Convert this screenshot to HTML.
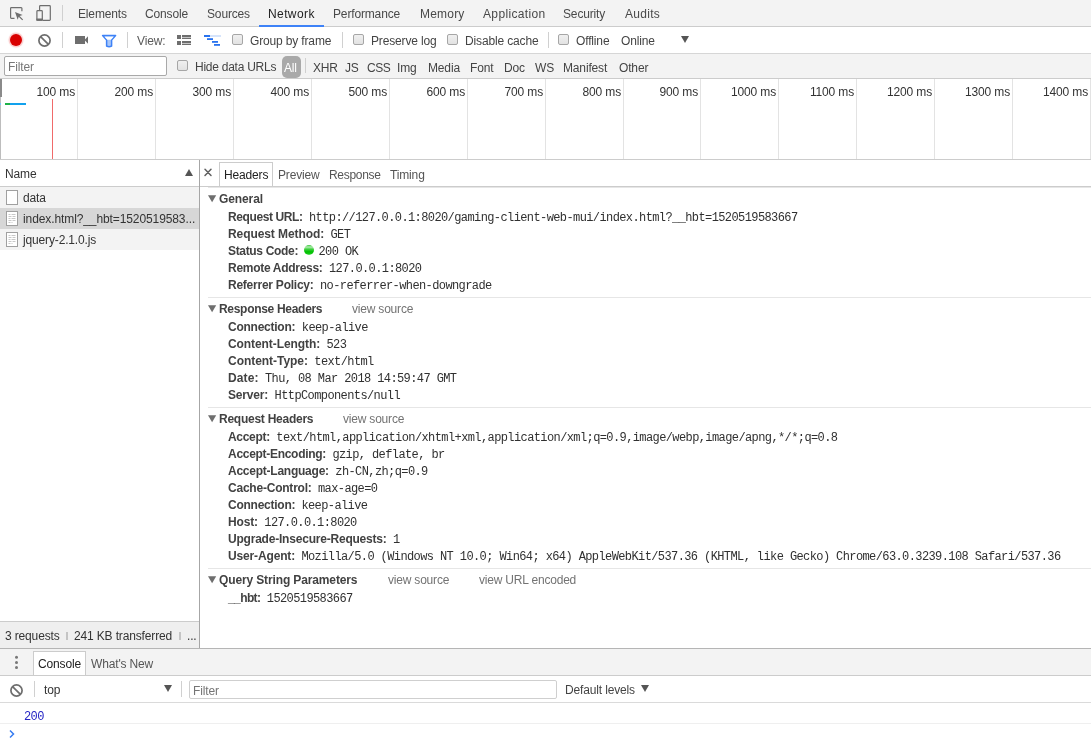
<!DOCTYPE html>
<html><head><meta charset="utf-8">
<style>
*{box-sizing:border-box}
html,body{margin:0;padding:0}
body{width:1091px;height:746px;overflow:hidden;position:relative;background:#fff;font-family:"Liberation Sans",sans-serif;font-size:12px;color:#333}
.bg{position:absolute}
.t{position:absolute;white-space:nowrap;line-height:14px;letter-spacing:-.15px}
.m{font-family:"Liberation Mono",monospace;font-size:12px;letter-spacing:-.6px;padding-top:1px}
.hl{position:absolute;height:1px}
.vl{position:absolute;width:1px}
.cb{position:absolute;width:11px;height:11px;border:1px solid #a6a6a6;border-radius:2px;background:linear-gradient(#f0f0f0,#e2e2e2)}
.sep{position:absolute;width:1px;background:#d0d0d0}
svg{position:absolute}
.k{font-weight:bold;color:#424242}
.sec{position:absolute;left:0;width:891px}
</style></head><body><div id="root" style="position:absolute;left:0;top:0;width:1091px;height:746px;will-change:transform">
<!-- ============ TAB BAR ============ -->
<div class="bg" style="left:0;top:0;width:1091px;height:26px;background:#f3f3f3"></div>
<div class="hl" style="left:0;top:26px;width:1091px;background:#cccccc"></div>
<svg style="left:8px;top:5px" width="18" height="18" viewBox="0 0 18 18">
 <path d="M6.5 13.3H3.3a.7.7 0 0 1-.7-.7V3.4a.7.7 0 0 1 .7-.7h9.9a.7.7 0 0 1 .7.7V6.2" fill="none" stroke="#6e6e6e" stroke-width="1.2"/>
 <path d="M7 7.1L14.6 9.9L11.6 10.9L15.1 14.4L14.2 15.3L10.7 11.8L9.7 14.7Z" fill="#6e6e6e"/>
</svg>
<svg style="left:35px;top:4px" width="18" height="18" viewBox="0 0 18 18">
 <path d="M4.6 6.2V2.4A.8.8 0 0 1 5.4 1.6h9.1a.8.8 0 0 1 .8.8v13.1a.8.8 0 0 1-.8.8H7.8" fill="none" stroke="#6e6e6e" stroke-width="1.2"/>
 <rect x="1.9" y="6.6" width="5.4" height="9.6" rx=".8" fill="none" stroke="#6e6e6e" stroke-width="1.2"/>
 <rect x="1.3" y="14.6" width="6.6" height="2.2" rx=".5" fill="#6e6e6e"/>
</svg>
<div class="sep" style="left:62px;top:5px;height:16px"></div>
<div class="t" style="left:78px;top:7px;color:#494949">Elements</div>
<div class="t" style="left:145px;top:7px;color:#494949">Console</div>
<div class="t" style="left:207px;top:7px;color:#494949">Sources</div>
<div class="t" style="left:268px;top:7px;color:#222;letter-spacing:.4px">Network</div>
<div class="t" style="left:333px;top:7px;color:#494949">Performance</div>
<div class="t" style="left:420px;top:7px;color:#494949;letter-spacing:.2px">Memory</div>
<div class="t" style="left:483px;top:7px;color:#494949;letter-spacing:.35px">Application</div>
<div class="t" style="left:563px;top:7px;color:#494949">Security</div>
<div class="t" style="left:625px;top:7px;color:#494949;letter-spacing:.3px">Audits</div>
<div class="bg" style="left:259px;top:25px;width:65px;height:2px;background:#3e82f7"></div>

<!-- ============ TOOLBAR ============ -->
<div class="hl" style="left:0;top:53px;width:1091px;background:#d6d6d6"></div>
<div class="bg" style="left:10px;top:34px;width:12px;height:12px;border-radius:50%;background:#d90000;box-shadow:0 0 1px 1.5px rgba(240,80,80,.3)"></div>
<svg style="left:37px;top:33px" width="15" height="15" viewBox="0 0 15 15">
 <circle cx="7.5" cy="7.5" r="5.6" fill="none" stroke="#6e6e6e" stroke-width="1.7"/>
 <path d="M3.6 3.6L11.4 11.4" stroke="#6e6e6e" stroke-width="1.7"/>
</svg>
<div class="sep" style="left:62px;top:32px;height:16px"></div>
<svg style="left:74px;top:35px" width="16" height="10" viewBox="0 0 16 10">
 <rect x="1" y="1" width="10" height="8" fill="#6e6e6e"/>
 <path d="M10.5 5L14 1.2V8.8Z" fill="#6e6e6e"/>
</svg>
<svg style="left:101px;top:34px" width="17" height="14" viewBox="0 0 17 14">
 <path d="M1.6 1.5H14.6L10.6 6V12Q8.1 13.3 5.6 12V6Z" fill="#a9c7f8" stroke="#3e82f7" stroke-width="1.5" stroke-linejoin="round"/>
 <path d="M3.5 2.7H12.7L9.9 5.8H6.3Z" fill="#fff"/>
</svg>
<div class="sep" style="left:127px;top:32px;height:16px"></div>
<div class="t" style="left:137px;top:34px;color:#5a5a5a">View:</div>
<svg style="left:176px;top:34px" width="16" height="13" viewBox="0 0 16 13">
 <rect x="1" y="1" width="4" height="4" fill="#6e6e6e"/>
 <rect x="6" y="1" width="9" height="2.4" fill="#6e6e6e"/>
 <rect x="6" y="4" width="9" height="1" fill="#6e6e6e"/>
 <rect x="1" y="7" width="4" height="4" fill="#6e6e6e"/>
 <rect x="6" y="7" width="9" height="2.4" fill="#6e6e6e"/>
 <rect x="6" y="10" width="9" height="1" fill="#6e6e6e"/>
</svg>
<svg style="left:203px;top:34px" width="20" height="13" viewBox="0 0 20 13">
 <rect x="7" y="1" width="11" height="2" fill="#d6e4fb"/>
 <rect x="1" y="1" width="6" height="2" fill="#2a73ee"/>
 <rect x="4" y="4.2" width="6" height="1.8" fill="#2a73ee"/>
 <rect x="9" y="7" width="6" height="1.8" fill="#2a73ee"/>
 <rect x="11" y="10" width="6" height="1.8" fill="#2a73ee"/>
</svg>
<div class="cb" style="left:232px;top:34px"></div>
<div class="t" style="left:250px;top:34px;color:#444">Group by frame</div>
<div class="sep" style="left:342px;top:32px;height:16px"></div>
<div class="cb" style="left:353px;top:34px"></div>
<div class="t" style="left:371px;top:34px;color:#444">Preserve log</div>
<div class="cb" style="left:447px;top:34px"></div>
<div class="t" style="left:465px;top:34px;color:#444">Disable cache</div>
<div class="sep" style="left:548px;top:32px;height:16px"></div>
<div class="cb" style="left:558px;top:34px"></div>
<div class="t" style="left:576px;top:34px;color:#444">Offline</div>
<div class="t" style="left:621px;top:34px;color:#444">Online</div>
<svg style="left:680px;top:35px" width="10" height="9" viewBox="0 0 10 9"><path d="M1 1H9L5 8Z" fill="#555"/></svg>

<!-- ============ FILTER BAR ============ -->
<div class="bg" style="left:0;top:54px;width:1091px;height:24px;background:#f3f3f3"></div>
<div class="hl" style="left:0;top:78px;width:1091px;background:#cccccc"></div>
<div class="bg" style="left:4px;top:56px;width:163px;height:20px;border:1px solid #a9a9a9;border-radius:2px;background:#fff"></div>
<div class="t" style="left:8px;top:60px;color:#777">Filter</div>
<div class="cb" style="left:177px;top:60px"></div>
<div class="t" style="left:195px;top:60px;letter-spacing:-.25px;color:#444">Hide data URLs</div>
<div class="bg" style="left:282px;top:56px;width:19px;height:22px;border-radius:5px;background:#a9a9a9"></div>
<div class="t" style="left:284px;top:61px;color:#fff">All</div>
<div class="sep" style="left:305px;top:58px;height:15px"></div>
<div class="t" style="left:313px;top:61px;color:#444">XHR</div>
<div class="t" style="left:345px;top:61px;color:#444">JS</div>
<div class="t" style="left:367px;top:61px;letter-spacing:-.5px;color:#444">CSS</div>
<div class="t" style="left:397px;top:61px;color:#444">Img</div>
<div class="t" style="left:428px;top:61px;color:#444">Media</div>
<div class="t" style="left:470px;top:61px;color:#444">Font</div>
<div class="t" style="left:504px;top:61px;color:#444">Doc</div>
<div class="t" style="left:535px;top:61px;color:#444">WS</div>
<div class="t" style="left:563px;top:61px;color:#444">Manifest</div>
<div class="t" style="left:619px;top:61px;color:#444">Other</div>

<!-- ============ TIMELINE ============ -->
<div class="hl" style="left:0;top:159px;width:1091px;background:#cccccc"></div>
<div id="grid"><div class="vl" style="left:77px;top:79px;height:80px;background:#e3e3e3"></div>
<div class="t" style="right:1016px;top:85px;color:#333">100 ms</div>
<div class="vl" style="left:155px;top:79px;height:80px;background:#e3e3e3"></div>
<div class="t" style="right:938px;top:85px;color:#333">200 ms</div>
<div class="vl" style="left:233px;top:79px;height:80px;background:#e3e3e3"></div>
<div class="t" style="right:860px;top:85px;color:#333">300 ms</div>
<div class="vl" style="left:311px;top:79px;height:80px;background:#e3e3e3"></div>
<div class="t" style="right:782px;top:85px;color:#333">400 ms</div>
<div class="vl" style="left:389px;top:79px;height:80px;background:#e3e3e3"></div>
<div class="t" style="right:704px;top:85px;color:#333">500 ms</div>
<div class="vl" style="left:467px;top:79px;height:80px;background:#e3e3e3"></div>
<div class="t" style="right:626px;top:85px;color:#333">600 ms</div>
<div class="vl" style="left:545px;top:79px;height:80px;background:#e3e3e3"></div>
<div class="t" style="right:548px;top:85px;color:#333">700 ms</div>
<div class="vl" style="left:623px;top:79px;height:80px;background:#e3e3e3"></div>
<div class="t" style="right:470px;top:85px;color:#333">800 ms</div>
<div class="vl" style="left:700px;top:79px;height:80px;background:#e3e3e3"></div>
<div class="t" style="right:393px;top:85px;color:#333">900 ms</div>
<div class="vl" style="left:778px;top:79px;height:80px;background:#e3e3e3"></div>
<div class="t" style="right:315px;top:85px;color:#333">1000 ms</div>
<div class="vl" style="left:856px;top:79px;height:80px;background:#e3e3e3"></div>
<div class="t" style="right:237px;top:85px;color:#333">1100 ms</div>
<div class="vl" style="left:934px;top:79px;height:80px;background:#e3e3e3"></div>
<div class="t" style="right:159px;top:85px;color:#333">1200 ms</div>
<div class="vl" style="left:1012px;top:79px;height:80px;background:#e3e3e3"></div>
<div class="t" style="right:81px;top:85px;color:#333">1300 ms</div>
<div class="vl" style="left:1090px;top:79px;height:80px;background:#e3e3e3"></div>
<div class="t" style="right:3px;top:85px;color:#333">1400 ms</div></div>
<div class="bg" style="left:0;top:79px;width:2px;height:18px;background:#8a8a8a"></div>
<div class="bg" style="left:0;top:97px;width:1px;height:62px;background:#bdbdbd"></div>
<div class="bg" style="left:0;top:103px;width:1px;height:2px;background:#7ec8f5"></div>
<div class="bg" style="left:5px;top:103px;width:5px;height:2px;background:#1fb24a"></div>
<div class="bg" style="left:10px;top:103px;width:16px;height:2px;background:#12a1ed"></div>
<div class="bg" style="left:52px;top:99px;width:1px;height:60px;background:#f06a6a"></div>

<!-- ============ LEFT PANE ============ -->
<div class="hl" style="left:0;top:186px;width:199px;background:#cccccc"></div>
<div class="vl" style="left:199px;top:160px;height:488px;background:#a6a6a6"></div>
<div class="t" style="left:5px;top:167px">Name</div>
<svg style="left:184px;top:168px" width="10" height="9" viewBox="0 0 10 9"><path d="M1 8H9L5 1Z" fill="#555"/></svg>
<div class="bg" style="left:0;top:187px;width:199px;height:21px;background:#f3f3f3"></div>
<div class="bg" style="left:0;top:208px;width:199px;height:21px;background:#d7d7d7"></div>
<div class="bg" style="left:0;top:229px;width:199px;height:21px;background:#f3f3f3"></div>
<svg style="left:6px;top:190px" width="13" height="16" viewBox="0 0 13 16"><rect x=".5" y=".5" width="11" height="14" fill="#fff" stroke="#a0a0a0"/></svg>
<svg style="left:6px;top:211px" width="13" height="16" viewBox="0 0 13 16"><rect x=".5" y=".5" width="11" height="14" fill="#fff" stroke="#a0a0a0"/>
 <path d="M2.5 3.5h2M5.5 3.5h4M2.5 5.5h3M6.5 5.5h3M2.5 7.5h2M5.5 7.5h4M2.5 9.5h3M6.5 9.5h3M2.5 11.5h2M5.5 11.5h1" stroke="#c8c8c8" stroke-width="1"/></svg>
<svg style="left:6px;top:232px" width="13" height="16" viewBox="0 0 13 16"><rect x=".5" y=".5" width="11" height="14" fill="#fff" stroke="#a0a0a0"/>
 <path d="M2.5 3.5h2M5.5 3.5h4M2.5 5.5h3M6.5 5.5h3M2.5 7.5h2M5.5 7.5h4M2.5 9.5h3M6.5 9.5h3M2.5 11.5h2M5.5 11.5h1" stroke="#c8c8c8" stroke-width="1"/></svg>
<div class="t" style="left:23px;top:191px">data</div>
<div class="t" style="left:23px;top:212px;letter-spacing:-.1px">index.html?__hbt=1520519583...</div>
<div class="t" style="left:23px;top:233px">jquery-2.1.0.js</div>
<!-- status bar -->
<div class="hl" style="left:0;top:621px;width:199px;background:#cccccc"></div>
<div class="bg" style="left:0;top:622px;width:199px;height:26px;background:#efefef"></div>
<div class="t" style="left:5px;top:629px">3 requests</div>
<div class="bg" style="left:66px;top:632px;width:2px;height:8px;background:#c4c4c4"></div>
<div class="t" style="left:74px;top:629px;letter-spacing:-.15px">241 KB transferred</div>
<div class="bg" style="left:179px;top:632px;width:2px;height:8px;background:#c4c4c4"></div>
<div class="t" style="left:187px;top:629px">...</div>

<!-- ============ DETAILS ============ -->
<div class="hl" style="left:200px;top:186px;width:891px;background:#cccccc"></div>
<div class="hl" style="left:208px;top:187px;width:883px;background:#e6e6e6"></div>
<svg style="left:203px;top:167px" width="10" height="10" viewBox="0 0 10 10"><path d="M2 2.3L8 8.5M8 2.3L2 8.5" stroke="#606060" stroke-width="1.5" stroke-linecap="round"/></svg>
<div class="bg" style="left:219px;top:162px;width:54px;height:24px;border:1px solid #cccccc;border-bottom:none;background:#fff"></div>
<div class="t" style="left:224px;top:168px;color:#222">Headers</div>
<div class="t" style="left:278px;top:168px;color:#555">Preview</div>
<div class="t" style="left:329px;top:168px;color:#555;letter-spacing:-.3px">Response</div>
<div class="t" style="left:390px;top:168px;color:#555">Timing</div>

<div id="secs">
<svg style="left:208px;top:195px" width="9" height="8" viewBox="0 0 9 8"><path d="M0 .3H8.2L4.1 7.3Z" fill="#6e6e6e"/></svg><div class="t k" style="left:219px;top:192px;letter-spacing:-0.1px">General</div>
<div class="t k" style="left:228px;top:210px;letter-spacing:-0.4px">Request URL:</div><div class="t m" style="left:309px;top:210px;color:#303030">http://127.0.0.1:8020/gaming-client-web-mui/index.html?__hbt=1520519583667</div>
<div class="t k" style="left:228px;top:227px;letter-spacing:-0.08px">Request Method:</div><div class="t m" style="left:330.5px;top:227px;color:#303030">GET</div>
<div class="t k" style="left:228px;top:244px;letter-spacing:-0.33px">Status Code:</div><div class="bg" style="left:304px;top:245px;width:10px;height:10px;border-radius:50%;background:linear-gradient(#33c433 0,#b4ecb4 20%,#3fd03f 42%,#00c000 68%,#12c812 85%,#5ae25a 100%)"></div><div class="t m" style="left:318.5px;top:244px;color:#303030">200 OK</div>
<div class="t k" style="left:228px;top:261px;letter-spacing:-0.29px">Remote Address:</div><div class="t m" style="left:329px;top:261px;color:#303030">127.0.0.1:8020</div>
<div class="t k" style="left:228px;top:278px;letter-spacing:-0.24px">Referrer Policy:</div><div class="t m" style="left:320px;top:278px;color:#303030">no-referrer-when-downgrade</div>
<div class="hl" style="left:208px;top:297px;width:883px;background:#e6e6e6"></div>
<svg style="left:208px;top:305px" width="9" height="8" viewBox="0 0 9 8"><path d="M0 .3H8.2L4.1 7.3Z" fill="#6e6e6e"/></svg><div class="t k" style="left:219px;top:302px;letter-spacing:-0.3px">Response Headers</div><div class="t" style="left:352px;top:302px;color:#737373;letter-spacing:-.2px">view source</div>
<div class="t k" style="left:228px;top:320px;letter-spacing:-0.25px">Connection:</div><div class="t m" style="left:301.8px;top:320px;color:#303030">keep-alive</div>
<div class="t k" style="left:228px;top:337px;letter-spacing:-0.08px">Content-Length:</div><div class="t m" style="left:326.5px;top:337px;color:#303030">523</div>
<div class="t k" style="left:228px;top:354px;letter-spacing:-0.04px">Content-Type:</div><div class="t m" style="left:314.3px;top:354px;color:#303030">text/html</div>
<div class="t k" style="left:228px;top:371px;letter-spacing:0.12px">Date:</div><div class="t m" style="left:265px;top:371px;color:#303030">Thu, 08 Mar 2018 14:59:47 GMT</div>
<div class="t k" style="left:228px;top:388px;letter-spacing:-0.17px">Server:</div><div class="t m" style="left:274.6px;top:388px;color:#303030">HttpComponents/null</div>
<div class="hl" style="left:208px;top:407px;width:883px;background:#e6e6e6"></div>
<svg style="left:208px;top:415px" width="9" height="8" viewBox="0 0 9 8"><path d="M0 .3H8.2L4.1 7.3Z" fill="#6e6e6e"/></svg><div class="t k" style="left:219px;top:412px;letter-spacing:-0.25px">Request Headers</div><div class="t" style="left:343px;top:412px;color:#737373;letter-spacing:-.2px">view source</div>
<div class="t k" style="left:228px;top:430px;letter-spacing:-0.3px">Accept:</div><div class="t m" style="left:276.3px;top:430px;color:#303030">text/html,application/xhtml+xml,application/xml;q=0.9,image/webp,image/apng,*/*;q=0.8</div>
<div class="t k" style="left:228px;top:447px;letter-spacing:-0.29px">Accept-Encoding:</div><div class="t m" style="left:332.4px;top:447px;color:#303030">gzip, deflate, br</div>
<div class="t k" style="left:228px;top:464px;letter-spacing:-0.24px">Accept-Language:</div><div class="t m" style="left:335.3px;top:464px;color:#303030">zh-CN,zh;q=0.9</div>
<div class="t k" style="left:228px;top:481px;letter-spacing:-0.22px">Cache-Control:</div><div class="t m" style="left:318px;top:481px;color:#303030">max-age=0</div>
<div class="t k" style="left:228px;top:498px;letter-spacing:-0.25px">Connection:</div><div class="t m" style="left:301.4px;top:498px;color:#303030">keep-alive</div>
<div class="t k" style="left:228px;top:515px;letter-spacing:-0.15px">Host:</div><div class="t m" style="left:264.3px;top:515px;color:#303030">127.0.0.1:8020</div>
<div class="t k" style="left:228px;top:532px;letter-spacing:-0.21px">Upgrade-Insecure-Requests:</div><div class="t m" style="left:393px;top:532px;color:#303030">1</div>
<div class="t k" style="left:228px;top:549px;letter-spacing:-0.15px">User-Agent:</div><div class="t m" style="left:301.4px;top:549px;color:#303030">Mozilla/5.0 (Windows NT 10.0; Win64; x64) AppleWebKit/537.36 (KHTML, like Gecko) Chrome/63.0.3239.108 Safari/537.36</div>
<div class="hl" style="left:208px;top:568px;width:883px;background:#e6e6e6"></div>
<svg style="left:208px;top:576px" width="9" height="8" viewBox="0 0 9 8"><path d="M0 .3H8.2L4.1 7.3Z" fill="#6e6e6e"/></svg><div class="t k" style="left:219px;top:573px;letter-spacing:-0.13px">Query String Parameters</div><div class="t" style="left:388px;top:573px;color:#737373;letter-spacing:-.2px">view source</div><div class="t" style="left:479px;top:573px;color:#737373;letter-spacing:-.2px">view URL encoded</div>
<div class="t k" style="left:228px;top:591px;letter-spacing:-0.6px">__hbt:</div><div class="t m" style="left:266.8px;top:591px;color:#303030">1520519583667</div>
</div><!--/secs-->

<!-- ============ DRAWER ============ -->
<div class="hl" style="left:0;top:648px;width:1091px;background:#b5b5b5"></div>
<div class="bg" style="left:0;top:649px;width:1091px;height:26px;background:#f3f3f3"></div>
<div class="hl" style="left:0;top:675px;width:1091px;background:#cccccc"></div>
<svg style="left:13px;top:655px" width="7" height="15" viewBox="0 0 7 15"><circle cx="3.5" cy="2.3" r="1.5" fill="#777"/><circle cx="3.5" cy="7.4" r="1.5" fill="#777"/><circle cx="3.5" cy="12.4" r="1.5" fill="#777"/></svg>
<div class="bg" style="left:33px;top:651px;width:53px;height:24px;border:1px solid #cccccc;border-bottom:none;background:#fff"></div>
<div class="t" style="left:38px;top:657px;color:#222">Console</div>
<div class="t" style="left:91px;top:657px;color:#555">What's New</div>
<div class="hl" style="left:0;top:702px;width:1091px;background:#dadada"></div>
<svg style="left:9px;top:683px" width="15" height="15" viewBox="0 0 15 15">
 <circle cx="7.5" cy="7.5" r="5.6" fill="none" stroke="#6e6e6e" stroke-width="1.7"/>
 <path d="M3.6 3.6L11.4 11.4" stroke="#6e6e6e" stroke-width="1.7"/>
</svg>
<div class="sep" style="left:34px;top:681px;height:16px"></div>
<div class="t" style="left:44px;top:683px">top</div>
<svg style="left:163px;top:684px" width="10" height="9" viewBox="0 0 10 9"><path d="M1 1H9L5 8Z" fill="#555"/></svg>
<div class="sep" style="left:181px;top:681px;height:16px"></div>
<div class="bg" style="left:189px;top:680px;width:368px;height:19px;border:1px solid #cfcfcf;border-radius:2px;background:#fff"></div>
<div class="t" style="left:193px;top:684px;color:#757575">Filter</div>
<div class="t" style="left:565px;top:683px;color:#444;letter-spacing:-.15px">Default levels</div>
<svg style="left:640px;top:684px" width="10" height="9" viewBox="0 0 10 9"><path d="M1 1H9L5 8Z" fill="#555"/></svg>
<div class="t m" style="left:24px;top:709px;color:#2424c4">200</div>
<div class="hl" style="left:0;top:723px;width:1091px;background:#efefef"></div>
<svg style="left:8px;top:729px" width="8" height="10" viewBox="0 0 8 10"><path d="M2 1.5L5.5 5L2 8.5" fill="none" stroke="#367cf1" stroke-width="1.5"/></svg>
</div></body></html>
